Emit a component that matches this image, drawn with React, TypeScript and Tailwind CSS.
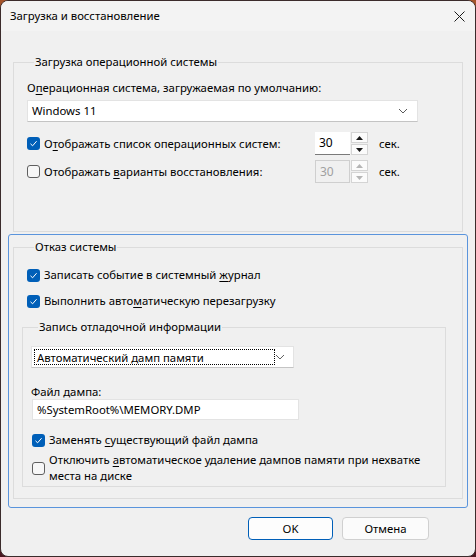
import React from 'react';

const font = { fontFamily: '"Noto Sans", "Liberation Sans", sans-serif' };

function Check({ checked }: { checked?: boolean }) {
  return checked ? (
    <span className="flex h-[13px] w-[13px] shrink-0 items-center justify-center rounded-[3px] bg-[#005fb8]">
      <svg width="9" height="9" viewBox="0 0 9 9" fill="none">
        <path d="M1.5 4.8 L3.6 6.8 L7.6 2.2" stroke="white" strokeWidth="1" />
      </svg>
    </span>
  ) : (
    <span className="h-[13px] w-[13px] shrink-0 rounded-[3px] border border-[#5f5f5f] bg-[#f7f7f7]" />
  );
}

function CheckRow({ checked, children, className = '' }: { checked?: boolean; children: React.ReactNode; className?: string }) {
  return (
    <div className={`flex items-center gap-[4px] leading-[16px] ${className}`}>
      <Check checked={checked} />
      <span>{children}</span>
    </div>
  );
}

function U({ children }: { children: React.ReactNode }) {
  return <span className="underline underline-offset-2">{children}</span>;
}

function Chevron() {
  return (
    <svg width="10" height="6" viewBox="0 0 10 6" fill="none">
      <path d="M1 1 L5 5 L9 1" stroke="#5a5a5a" strokeWidth="1" />
    </svg>
  );
}

function Spinner({ disabled }: { disabled?: boolean }) {
  const arrow = disabled ? '#b5b5b5' : '#1a1a1a';
  return (
    <div className="flex h-[23px]">
      <div
        className={`flex w-[35px] items-center pl-[4px] text-[12px] ${
          disabled ? 'border border-[#cfcfcf] bg-[#f0f0f0] text-[#a0a0a0]' : 'border-b border-[#7a7a7a] bg-white'
        }`}
      >
        30
      </div>
      <div className="ml-[1px] flex w-[17px] flex-col gap-[1px]">
        {[0, 1].map(i => (
          <div key={i} className="flex flex-1 items-center justify-center border border-[#d4d4d4] bg-[#fbfbfb]">
            <svg width="7" height="4" viewBox="0 0 7 4">
              <path d={i === 0 ? 'M0 4 L3.5 0 L7 4 Z' : 'M0 0 L3.5 4 L7 0 Z'} fill={arrow} />
            </svg>
          </div>
        ))}
      </div>
    </div>
  );
}

function Group({ title, children, className = '' }: { title: string; children: React.ReactNode; className?: string }) {
  return (
    <fieldset className={`border border-[#dcdcdc] ${className}`}>
      <legend className="ml-[7px] px-[1px] leading-[16px]">{title}</legend>
      {children}
    </fieldset>
  );
}

export default function App() {
  return (
    <div className="h-[557px] w-[476px] bg-gradient-to-b from-[#a5542a] to-[#4a1620] text-[11.35px] text-black" style={font}>
      <div className="flex h-full flex-col overflow-hidden rounded-[8px] border border-[#3b2b2b] bg-[#f0f0f0]">
        <div className="flex h-[30px] shrink-0 items-center justify-between bg-[#f3f3f3] pl-[9px] pr-[10px]">
          <span>Загрузка и восстановление</span>
          <svg width="11" height="11" viewBox="0 0 11 11">
            <path d="M0.5 0.5 L10.5 10.5 M10.5 0.5 L0.5 10.5" stroke="#1a1a1a" strokeWidth="1" />
          </svg>
        </div>

        <div className="flex flex-col px-[7px] pt-[23px]">
          <Group title="Загрузка операционной системы" className="mx-[5px] h-[178px] px-[13px] pt-[10px]">
            <div className="leading-[16px]">
              О<U>п</U>ерационная система, загружаемая по умолчанию:
            </div>
            <div className="mt-[4px] flex h-[22px] w-[391px] items-center justify-between border border-[#e3e3e3] border-b-[#c4c4c4] bg-white pl-[4px] pr-[9px]">
              <span>Windows 11</span>
              <Chevron />
            </div>
            <div className="mt-[10px] flex items-center">
              <CheckRow checked className="w-[288px]">
                О<U>т</U>ображать список операционных систем:
              </CheckRow>
              <Spinner />
              <span className="ml-[11px]">сек.</span>
            </div>
            <div className="mt-[5px] flex items-center">
              <CheckRow className="w-[288px]">
                Отображать <U>в</U>арианты восстановления:
              </CheckRow>
              <Spinner disabled />
              <span className="ml-[11px]">сек.</span>
            </div>
          </Group>

          <div className="mt-[2px] rounded-[3px] border border-[#5a94dc] p-[4px] pb-[8px]">
            <Group title="Отказ системы" className="px-[13px] pb-[11px] pt-[12px]">
              <CheckRow checked>
                Записать событие в системный <U>ж</U>урнал
              </CheckRow>
              <CheckRow checked className="mt-[10px]">
                Выполнить авто<U>м</U>атическую перезагрузку
              </CheckRow>
              <Group title="Запись отладочной информации" className="-ml-[5px] mt-[10px] w-[424px] pb-[2px] pl-[8px] pr-[10px] pt-[11px]">
                <div className="flex h-[22px] w-[263px] items-center justify-between border border-[#e3e3e3] border-b-[#c4c4c4] bg-white p-[2px] pr-[8px]">
                  <span className="flex h-full w-[242px] items-center border border-dotted border-black pl-[2px]">
                    Автоматический дамп памяти
                  </span>
                  <Chevron />
                </div>
                <div className="mt-[16px] leading-[15px]">Файл дампа:</div>
                <div className="ml-[1px] flex h-[21px] w-[267px] items-center border border-[#e3e3e3] bg-white pl-[4px]">
                  %SystemRoot%\MEMORY.DMP
                </div>
                <CheckRow checked className="ml-[1px] mt-[12px]">
                  Заменять <U>с</U>уществующий файл дампа
                </CheckRow>
                <CheckRow className="ml-[1px] mt-[4px]">
                  Отключить <U>а</U>втоматическое удаление дампов памяти при нехватке места на диске
                </CheckRow>
              </Group>
            </Group>
          </div>

          <div className="mt-[9px] flex justify-end gap-[9px] pr-[39px]">
            <button className="h-[23px] w-[85px] rounded-[4px] border border-[#005fb8] bg-[#fdfdfd]">OK</button>
            <button className="h-[23px] w-[87px] rounded-[4px] border border-[#d0d0d0] bg-[#fbfbfb]">Отмена</button>
          </div>
        </div>
      </div>
    </div>
  );
}
